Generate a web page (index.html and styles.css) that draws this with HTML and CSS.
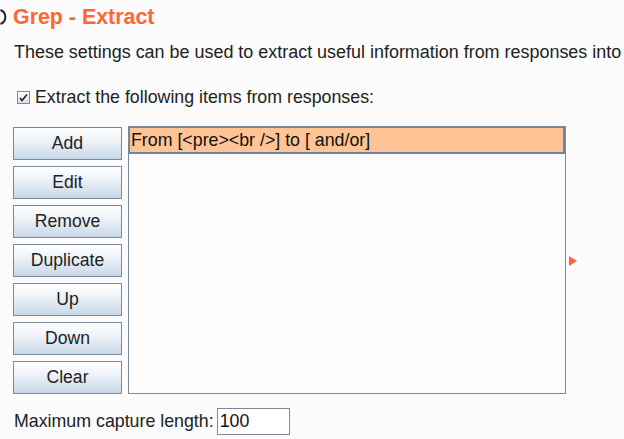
FILE: index.html
```html
<!DOCTYPE html>
<html>
<head>
<meta charset="utf-8">
<link rel="stylesheet" href="styles.css">
</head>
<body>
<div class="page">
  <div class="title-row">
    <svg class="help-icon" width="8" height="20" viewBox="0 0 8 20"><path d="M0.5 3 A7.5 7.5 0 0 1 0.5 17" fill="none" stroke="#222" stroke-width="2"/></svg>
    <h1 class="title">Grep - Extract</h1>
  </div>
  <p class="desc">These settings can be used to extract useful information from responses into</p>
  <label class="check-row">
    <span class="checkbox"><svg width="9" height="9" viewBox="0 0 9 9"><path d="M1 5 L3 7.5 L8 1.5" fill="none" stroke="#222" stroke-width="1.6"/></svg></span>
    <span>Extract the following items from responses:</span>
  </label>
  <div class="editor">
    <div class="buttons">
      <button class="btn">Add</button>
      <button class="btn">Edit</button>
      <button class="btn">Remove</button>
      <button class="btn">Duplicate</button>
      <button class="btn">Up</button>
      <button class="btn">Down</button>
      <button class="btn">Clear</button>
    </div>
    <div class="list">
      <div class="item selected">From [&lt;pre&gt;&lt;br /&gt;] to [ and/or]</div>
    </div>
    <div class="arrow"></div>
  </div>
  <div class="max-row">
    <span>Maximum capture length:</span>
    <input class="num" type="text" value="100">
  </div>
</div>
</body>
</html>
```
FILE: styles.css
```css
html, body {
  margin: 0;
  padding: 0;
  background: #fbfbfb;
}
body {
  font-family: "Liberation Sans", Arial, sans-serif;
  color: #222;
  font-size: 17.8px;
  width: 624px;
  height: 439px;
  overflow: hidden;
}
.page {
  padding-left: 14px;
  padding-top: 4px;
}
.title-row {
  display: flex;
  align-items: center;
  height: 26px;
  margin-left: -14px;
}
.help-icon {
  width: 8px;
  margin-right: 5px;
}
.title {
  margin: 0;
  font-size: 21.4px;
  font-weight: bold;
  color: #ff6633;
}
.desc {
  margin: 12px 0 0 0;
  line-height: 20px;
  white-space: nowrap;
  font-size: 17.95px;
}
.check-row {
  display: flex;
  align-items: center;
  margin: 25px 0 0 3px;
  height: 20px;
  gap: 5px;
}
.checkbox {
  width: 11px;
  height: 11px;
  border: 1px solid #7a8a99;
  background: linear-gradient(#ffffff, #d6e0ea);
  display: flex;
  align-items: center;
  justify-content: center;
}
.editor {
  display: flex;
  margin-top: 20px;
  margin-left: -1px;
  align-items: flex-start;
}
.buttons {
  display: flex;
  flex-direction: column;
  gap: 6px;
  width: 109px;
}
.btn {
  height: 33px;
  border: 1px solid #7a8a99;
  background: linear-gradient(#ffffff 0%, #eef3f8 40%, #c8d8e8 100%);
  font-family: "Liberation Sans", Arial, sans-serif;
  font-size: 17.6px;
  color: #222;
  padding: 0;
}
.list {
  margin-left: 6px;
  width: 436px;
  height: 266px;
  border: 1px solid #7a8a99;
  background: #fcfcfc;
  margin-top: -1px;
}
.item {
  height: 24px;
  line-height: 24px;
  padding-left: 1px;
  font-size: 17.8px;
  color: #111;
}
.selected {
  background: #ffc496;
  border: 1px solid #6f85a8;
  border-right-width: 2px;
  border-bottom-width: 2px;
}
.arrow {
  width: 0;
  height: 0;
  border-top: 5px solid transparent;
  border-bottom: 5px solid transparent;
  border-left: 8px solid #ff6633;
  margin-left: 3px;
  margin-top: 129px;
}
.max-row {
  display: flex;
  align-items: center;
  margin-top: 14px;
  gap: 3px;
}
.num {
  width: 67px;
  height: 25px;
  border: 1px solid #7a8a99;
  background: #fff;
  font-family: "Liberation Sans", Arial, sans-serif;
  font-size: 17.8px;
  color: #111;
  padding: 0 2px;
  margin: 0;
  box-sizing: content-box;
}
```
